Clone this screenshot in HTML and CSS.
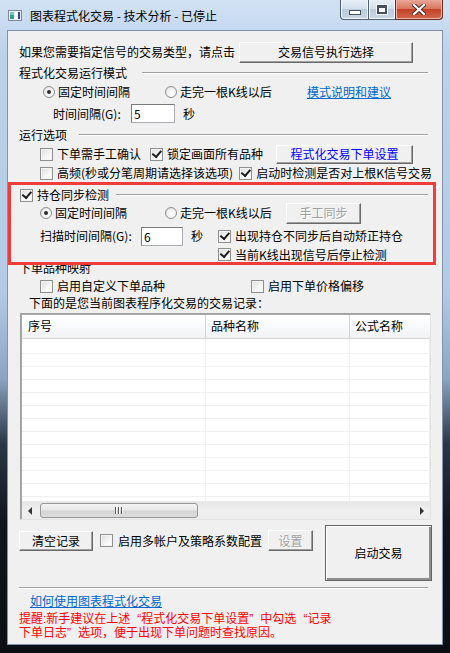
FILE: index.html
```html
<!DOCTYPE html>
<html lang="zh-CN">
<head>
    <meta charset="UTF-8">
    <meta name="viewport" content="width=device-width, initial-scale=1.0">
    <title>图表程式化交易</title>
    <link rel="stylesheet" href="styles.css">
</head>
<body>
<div class="window">
    <div class="titlebar">
        <svg class="app-icon" width="14" height="11" viewBox="0 0 14 11">
            <rect x="0.5" y="0.5" width="13" height="10" fill="#e8eef4" stroke="#7c8a99"/>
            <rect x="2" y="2" width="4" height="7" fill="#3d9a8a"/>
            <rect x="2" y="2" width="4" height="3" fill="#7cc7b5"/>
            <rect x="7" y="2" width="2" height="7" fill="#ffffff"/>
            <rect x="10" y="2" width="2" height="7" fill="#2e4f8c"/>
        </svg>
        <span class="title">图表程式化交易 - 技术分析 - 已停止</span>
        <div class="caption">
            <span class="cap cap-min"><i></i></span>
            <span class="cap cap-max"><i></i></span>
            <span class="cap cap-close">
                <svg width="14" height="11" viewBox="0 0 14 11">
                    <path d="M2 1 L12 10 M12 1 L2 10" stroke="#4a2a25" stroke-width="4" stroke-linecap="square"/>
                    <path d="M2 1 L12 10 M12 1 L2 10" stroke="#ffffff" stroke-width="2.2" stroke-linecap="square"/>
                </svg>
            </span>
        </div>
    </div>

    <div class="client">
        <div class="row r-top">
            <span class="txt">如果您需要指定信号的交易类型，请点击</span>
            <button class="btn btn-signal">交易信号执行选择</button>
        </div>

        <div class="group"><span class="txt">程式化交易运行模式</span><i class="etch gap-15"></i></div>
        <div class="row r-mode">
            <label class="opt w-122"><span class="radio on"></span><span class="txt">固定时间间隔</span></label>
            <label class="opt w-142"><span class="radio"></span><span class="txt">走完一根K线以后</span></label>
            <a class="link">模式说明和建议</a>
        </div>
        <div class="row r-interval">
            <span class="txt lbl-78">时间间隔(G):</span>
            <span class="edit w-44">5</span>
            <span class="txt sec">秒</span>
        </div>

        <div class="group h-18"><span class="txt">运行选项</span><i class="etch gap-12"></i></div>
        <div class="row r-opt1">
            <label class="opt w-110"><span class="cb"></span><span class="txt">下单需手工确认</span></label>
            <label class="opt w-126"><span class="cb on"></span><span class="txt">锁定画面所有品种</span></label>
            <button class="btn btn-order">程式化交易下单设置</button>
        </div>
        <div class="row r-opt2">
            <label class="opt w-202"><span class="cb"></span><span class="txt">高频(秒或分笔周期请选择该选项)</span></label>
            <label class="opt"><span class="cb on"></span><span class="txt">启动时检测是否对上根K信号交易</span></label>
        </div>

        <div class="group g-sync"><label class="opt"><span class="cb on"></span><span class="txt">持仓同步检测</span></label><i class="etch gap-7"></i></div>
        <div class="row r-sync">
            <label class="opt w-125"><span class="radio on"></span><span class="txt">固定时间间隔</span></label>
            <label class="opt w-121"><span class="radio"></span><span class="txt">走完一根K线以后</span></label>
            <button class="btn btn-sync" disabled>手工同步</button>
        </div>
        <div class="row r-scan">
            <span class="txt lbl-101">扫描时间间隔(G):</span>
            <span class="edit w-42">6</span>
            <span class="txt sec w-27">秒</span>
            <label class="opt"><span class="cb on"></span><span class="txt">出现持仓不同步后自动矫正持仓</span></label>
        </div>
        <div class="row r-scan2">
            <label class="opt"><span class="cb on"></span><span class="txt">当前K线出现信号后停止检测</span></label>
        </div>

        <div class="group g-map"><span class="txt">下单品种映射</span></div>
        <div class="row r-map">
            <label class="opt w-211"><span class="cb"></span><span class="txt">启用自定义下单品种</span></label>
            <label class="opt"><span class="cb"></span><span class="txt">启用下单价格偏移</span></label>
        </div>
        <div class="row r-note">
            <span class="txt">下面的是您当前图表程序化交易的交易记录：</span>
        </div>

        <div class="grid">
            <div class="grid-head">
                <span class="hcol c1">序号</span>
                <span class="hcol c2">品种名称</span>
                <span class="hcol c3">公式名称</span>
            </div>
            <div class="grid-body">
                <span class="bcol c1"></span>
                <span class="bcol c2"></span>
                <span class="bcol c3"></span>
            </div>
            <div class="hscroll">
                <span class="arrow left"></span>
                <span class="thumb"><i></i><i></i><i></i></span>
                <span class="arrow right"></span>
            </div>
        </div>

        <div class="bottom">
            <div class="bottom-left">
                <button class="btn btn-clear">清空记录</button>
                <label class="opt multi"><span class="cb"></span><span class="txt">启用多帐户及策略系数配置</span></label>
                <button class="btn btn-set" disabled>设置</button>
            </div>
            <button class="btn btn-start">启动交易</button>
        </div>

        <div class="sep"></div>

        <div class="row r-help">
            <a class="link">如何使用图表程式化交易</a>
        </div>
        <div class="warn">
            <div class="warn-line">提醒:新手建议在上述<span class="ql">“</span>程式化交易下单设置<span class="qr">”</span>中勾选<span class="ql">“</span>记录</div>
            <div class="warn-line">下单日志<span class="qr">”</span>选项，便于出现下单问题时查找原因。</div>
        </div>

        <div class="mark"></div>
    </div>
</div>
</body>
</html>
```

FILE: styles.css
```css
body {
    margin: 0;
    width: 450px;
    height: 653px;
    overflow: hidden;
    font-family: "Noto Sans CJK SC", "DejaVu Sans", sans-serif;
    font-size: 12px;
    color: #000;
}

.window {
    height: 653px;
    box-sizing: border-box;
    padding: 0 7px 8px 7px;
    display: flex;
    flex-direction: column;
    background: linear-gradient(to bottom, #d2e2f4 0%, #bcd2ec 8%, #b2cae6 45%, #8aa4c2 58%, #2a3646 68%, #10161e 80%, #0b0f14 100%);
}

/* title bar */
.titlebar {
    height: 30px;
    display: flex;
    align-items: center;
}
.app-icon {
    margin: 1px 0 0 1px;
}
.title {
    margin-left: 8px;
    line-height: 14px;
    margin-top: 1px;
}
.caption {
    margin-left: auto;
    align-self: flex-start;
    display: flex;
    height: 20px;
}
.cap {
    height: 20px;
    box-sizing: border-box;
    border: 1px solid #4f5f73;
    border-top: none;
    background: linear-gradient(to bottom, #e8eff7 0%, #d3dfec 45%, #b9cbde 50%, #c8d7e6 100%);
    display: flex;
    align-items: center;
    justify-content: center;
    box-shadow: inset 1px 0 #f4f8fc, inset -1px -1px #f4f8fc;
}
.cap-min {
    width: 28px;
    border-radius: 0 0 0 4px;
    border-right: none;
}
.cap-min i {
    width: 10px;
    height: 3px;
    margin-top: 6px;
    background: #fff;
    border: 1px solid #46505c;
}
.cap-max {
    width: 27px;
    border-right: none;
}
.cap-max i {
    width: 8px;
    height: 6px;
    border: 1px solid #46505c;
    border-top-width: 2px;
    background: #fff;
    box-shadow: inset 0 0 0 1px #46505c, 0 0 0 1px #fff;
    margin-top: -1px;
}
.cap-close {
    width: 48px;
    border-radius: 0 0 4px 0;
    border-color: #6b2a20;
    background: linear-gradient(to bottom, #e8a796 0%, #d9765f 45%, #c5432a 50%, #d0674b 100%);
    box-shadow: inset 1px 0 #efb8aa, inset -1px -1px #efb8aa;
}

/* dialog body */
.client {
    flex: 1;
    position: relative;
    background: #f0f0f0;
    border: 1px solid #8394aa;
    padding: 10px 10px 0 11px;
}

.txt {
    line-height: 14px;
    white-space: nowrap;
}

.row {
    display: flex;
    align-items: center;
}
.r-top { height: 22px; }
.r-mode { height: 18px; padding-left: 24px; }
.r-interval { height: 25px; padding-left: 34px; }
.r-opt1 { height: 20px; padding-left: 21px; }
.r-opt2 { height: 18px; padding-left: 21px; }
.r-sync { height: 20px; padding-left: 21px; }
.r-scan { height: 22px; margin-top: 2px; padding-left: 21px; }
.r-scan2 { height: 15px; padding-left: 199px; }
.r-map { height: 20px; margin-top: 2px; padding-left: 21px; }
.r-note { height: 14px; padding-left: 10px; }
.r-help { height: 16px; margin-top: 4px; padding-left: 11px; }

.group {
    height: 20px;
    display: flex;
    align-items: center;
}
.group.h-18 { height: 18px; }
.g-sync {
    height: 16px;
    margin-top: 5px;
    padding-left: 1px;
}
.g-map { height: 12px; }

.etch {
    flex: 1;
    height: 0;
    margin-right: 4px;
    border-top: 1px solid #a0a0a0;
    border-bottom: 1px solid #fff;
}
.gap-15 { margin-left: 15px; }
.gap-12 { margin-left: 12px; }
.gap-7 { margin-left: 7px; }

/* check boxes and radios */
.opt {
    display: flex;
    align-items: center;
}
.w-110 { width: 110px; }
.w-121 { width: 121px; }
.w-122 { width: 122px; }
.w-125 { width: 125px; }
.w-126 { width: 126px; }
.w-142 { width: 142px; }
.w-202 { width: 202px; }
.w-211 { width: 211px; }

.cb {
    width: 13px;
    height: 13px;
    box-sizing: border-box;
    margin-right: 4px;
    border: 1px solid #8e8f8f;
    background: linear-gradient(135deg, #dcdcdc 0%, #f6f6f6 60%, #fff 100%);
    box-shadow: inset 0 0 0 1px #f4f4f4;
    position: relative;
}
.cb.on::after {
    content: "";
    position: absolute;
    left: 2px;
    top: 0px;
    width: 4px;
    height: 7px;
    border: solid #1c1c1c;
    border-width: 0 2px 2px 0;
    transform: rotate(40deg);
    transform-origin: 70% 60%;
}

.radio {
    width: 12px;
    height: 12px;
    box-sizing: border-box;
    margin-right: 3px;
    border: 1px solid #8e8f8f;
    border-radius: 50%;
    background: radial-gradient(circle at 60% 60%, #fff 0%, #f2f2f2 50%, #d4d4d4 100%);
    position: relative;
}
.radio.on::after {
    content: "";
    position: absolute;
    left: 3px;
    top: 3px;
    width: 4px;
    height: 4px;
    border-radius: 50%;
    background: #2b2b2b;
}

.link {
    color: #0066cc;
    text-decoration: underline;
    line-height: 14px;
    cursor: pointer;
}

.edit {
    height: 19px;
    box-sizing: border-box;
    background: #fff;
    border: 1px solid #abadb3;
    border-top-color: #7a7a7a;
    border-left-color: #7a7a7a;
    padding-left: 2px;
    line-height: 17px;
}
.w-44 { width: 44px; }
.w-42 { width: 42px; }
.lbl-78 { width: 78px; }
.lbl-101 { width: 101px; }
.sec { margin-left: 8px; }
.w-27 { width: 27px; }

/* buttons */
.btn {
    font-family: inherit;
    font-size: 12px;
    line-height: 14px;
    padding: 0;
    background: #f0f0f0;
    border: 1px solid;
    border-color: #fff #696969 #696969 #fff;
    box-shadow: inset -1px -1px #a0a0a0;
    color: #000;
}
.btn:disabled {
    color: #a0a0a0;
    text-shadow: 1px 1px #fff;
}
.btn-signal {
    width: 174px;
    height: 21px;
    margin-left: 4px;
}
.btn-order {
    width: 137px;
    height: 19px;
    color: #0000ff;
}
.btn-sync {
    width: 75px;
    height: 21px;
}
.btn-clear {
    width: 74px;
    height: 20px;
}
.btn-set {
    width: 45px;
    height: 21px;
    margin-left: 6px;
}
.btn-start {
    width: 107px;
    height: 56px;
    margin-left: auto;
    border: 1px solid #646464;
    box-shadow: inset 1px 1px #fff, inset -2px -2px #8d8d8d;
}

/* record list */
.grid {
    margin: 3px 0 0 1px;
    width: 411px;
    height: 207px;
    box-sizing: border-box;
    border: 1px solid;
    border-color: #a0a0a0 #e3e3e3 #e3e3e3 #a0a0a0;
    box-shadow: inset 1px 1px #a8a8a8;
    background: #fff;
    display: flex;
    flex-direction: column;
    padding: 1px 0 0 1px;
}
.grid-head {
    height: 23px;
    display: flex;
    background: linear-gradient(to bottom, #ffffff 0%, #f7f8f9 60%, #f1f2f4 100%);
    border-bottom: 1px solid #d5d5d5;
}
.hcol {
    line-height: 22px;
    box-sizing: border-box;
    border-right: 1px solid #d5d5d5;
    padding-left: 5px;
}
.hcol.c1 { padding-left: 6px; }
.c1 { width: 184px; }
.c2 { width: 144px; }
.c3 { flex: 1; border-right: none; }
.grid-body {
    flex: 1;
    display: flex;
    background: repeating-linear-gradient(to bottom, transparent 0 12px, #f0f0f0 12px 13px);
    background-position: 0 2px;
}
.bcol {
    box-sizing: border-box;
    border-right: 1px solid #f0f0f0;
}
.hscroll {
    height: 17px;
    display: flex;
    align-items: center;
    background: linear-gradient(to bottom, #e6e6e6, #f0f0f0 50%, #ececec);
    border-top: 1px solid #eaeaea;
}
.arrow {
    width: 0;
    height: 0;
    border-top: 4px solid transparent;
    border-bottom: 4px solid transparent;
}
.arrow.left {
    margin-left: 6px;
    border-right: 4px solid #333;
}
.arrow.right {
    margin-left: auto;
    margin-right: 6px;
    border-left: 4px solid #333;
}
.thumb {
    margin-left: 8px;
    width: 158px;
    height: 15px;
    box-sizing: border-box;
    border: 1px solid #979797;
    border-radius: 3px;
    background: linear-gradient(to bottom, #f3f3f3 0%, #e8e8e8 45%, #d6d6d6 55%, #dcdcdc 100%);
    display: flex;
    justify-content: center;
    align-items: center;
    gap: 1px;
}
.thumb i {
    width: 1px;
    height: 7px;
    background: #555;
    box-shadow: 1px 0 #fff;
    margin-right: 1px;
}

/* bottom controls */
.bottom {
    height: 56px;
    margin-top: 5px;
    display: flex;
    align-items: flex-start;
}
.bottom-left {
    display: flex;
    align-items: center;
    height: 21px;
    margin-top: 5px;
}
.multi {
    margin-left: 7px;
}
.multi .cb {
    margin-right: 5px;
}

.sep {
    margin: 6px 4px 0 0;
    border-top: 1px solid #a0a0a0;
    border-bottom: 1px solid #fff;
}

.warn {
    margin-top: 3px;
    color: #ff0000;
    font-family: "Liberation Sans", "Noto Sans CJK SC", sans-serif;
}
.warn-line {
    height: 14px;
    line-height: 14px;
    white-space: nowrap;
}
.ql { padding-left: 7px; }
.qr { padding-right: 7px; }

/* red annotation frame over the sync section */
.mark {
    position: absolute;
    left: 0;
    top: 151px;
    width: 428px;
    height: 83px;
    box-sizing: border-box;
    border: 3px solid #f23c3c;
    pointer-events: none;
}
```
